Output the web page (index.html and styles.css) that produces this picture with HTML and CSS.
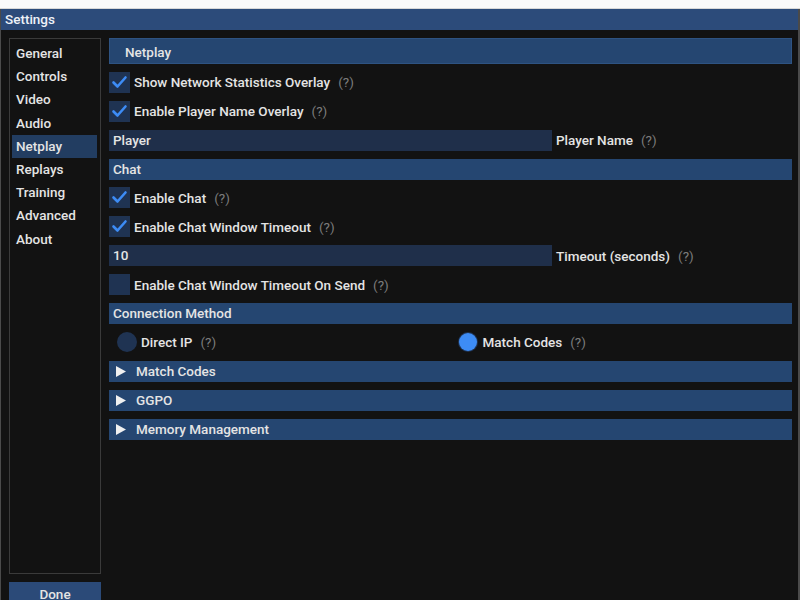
FILE: index.html
```html
<!DOCTYPE html>
<html lang="en">
<head>
    <meta charset="UTF-8">
    <title>Settings</title>
    <link rel="stylesheet" href="styles.css">
</head>
<body>
    <div class="top-strip"></div>
    <div class="window">
        <div class="title-bar">Settings</div>
        <div class="window-body">
            <div class="side">
                <nav class="side-list">
                    <div class="side-item">General</div>
                    <div class="side-item">Controls</div>
                    <div class="side-item">Video</div>
                    <div class="side-item">Audio</div>
                    <div class="side-item active">Netplay</div>
                    <div class="side-item">Replays</div>
                    <div class="side-item">Training</div>
                    <div class="side-item">Advanced</div>
                    <div class="side-item">About</div>
                </nav>
                <button class="done">Done</button>
            </div>

            <main class="content">
                <div class="tab-head">Netplay</div>

                <div class="row">
                    <span class="check on"><svg width="21" height="21" viewBox="0 0 21 21"><polyline points="4.5,10.5 8.5,14.5 16.5,5.5" /></svg></span>
                    <span class="label">Show Network Statistics Overlay</span>
                    <span class="help">(?)</span>
                </div>
                <div class="row">
                    <span class="check on"><svg width="21" height="21" viewBox="0 0 21 21"><polyline points="4.5,10.5 8.5,14.5 16.5,5.5" /></svg></span>
                    <span class="label">Enable Player Name Overlay</span>
                    <span class="help">(?)</span>
                </div>
                <div class="row">
                    <div class="input">Player</div>
                    <span class="label">Player Name</span>
                    <span class="help">(?)</span>
                </div>

                <div class="section">Chat</div>
                <div class="row">
                    <span class="check on"><svg width="21" height="21" viewBox="0 0 21 21"><polyline points="4.5,10.5 8.5,14.5 16.5,5.5" /></svg></span>
                    <span class="label">Enable Chat</span>
                    <span class="help">(?)</span>
                </div>
                <div class="row">
                    <span class="check on"><svg width="21" height="21" viewBox="0 0 21 21"><polyline points="4.5,10.5 8.5,14.5 16.5,5.5" /></svg></span>
                    <span class="label">Enable Chat Window Timeout</span>
                    <span class="help">(?)</span>
                </div>
                <div class="row">
                    <div class="input">10</div>
                    <span class="label">Timeout (seconds)</span>
                    <span class="help">(?)</span>
                </div>
                <div class="row">
                    <span class="check"></span>
                    <span class="label">Enable Chat Window Timeout On Send</span>
                    <span class="help">(?)</span>
                </div>

                <div class="section">Connection Method</div>
                <div class="row radios">
                    <div class="radio-opt">
                        <span class="radio"></span>
                        <span class="label">Direct IP</span>
                        <span class="help">(?)</span>
                    </div>
                    <div class="radio-opt">
                        <span class="radio on"></span>
                        <span class="label">Match Codes</span>
                        <span class="help">(?)</span>
                    </div>
                </div>

                <div class="section fold"><svg class="arrow" width="10" height="11" viewBox="0 0 10 11"><polygon points="0,0 10,5.5 0,11" /></svg>Match Codes</div>
                <div class="section fold"><svg class="arrow" width="10" height="11" viewBox="0 0 10 11"><polygon points="0,0 10,5.5 0,11" /></svg>GGPO</div>
                <div class="section fold"><svg class="arrow" width="10" height="11" viewBox="0 0 10 11"><polygon points="0,0 10,5.5 0,11" /></svg>Memory Management</div>
            </main>
        </div>
    </div>
</body>
</html>
```

FILE: styles.css
```css
:root {
    --blue-head: #254671;
    --blue-frame: #1f3352;
    --text: #e4e4e4;
    --row: 21px;
    --gap: 7.9px;
}
html, body {
    margin: 0;
    padding: 0;
    width: 100%;
    height: 100%;
    overflow: hidden;
    background: #121212;
    font-family: Roboto, "Liberation Sans", sans-serif;
    font-size: 13.5px;
    font-weight: 500;
    color: var(--text);
}
.top-strip {
    height: 8px;
    background: #fafafa;
    border-bottom: 1px solid #d8d8d8;
}
.window {
    height: 591px;
    display: flex;
    flex-direction: column;
    border-left: 1px solid #4a4a4a;
    border-right: 2px solid #4a4a4a;
    box-sizing: border-box;
}
.title-bar {
    height: 21px;
    line-height: 21px;
    padding-left: 4px;
    background: #2c4b7a;
    color: #eef2f8;
}
.window-body {
    flex: 1;
    display: flex;
    gap: 8px;
    padding: 8px 6px 0 8px;
    min-height: 0;
}
.side {
    width: 92px;
    display: flex;
    flex-direction: column;
    gap: 8px;
}
.side-list {
    flex-shrink: 0;
    height: 536px;
    box-sizing: border-box;
    border: 1px solid #3a3a3a;
    padding: 3px 3px 0 2px;
}
.side-item {
    height: 23.2px;
    line-height: 23px;
    padding-left: 4px;
}
.side-item.active {
    background: #223d61;
}
.done {
    flex-shrink: 0;
    height: 24px;
    padding: 0;
    border: none;
    background: #2b4a78;
    color: var(--text);
    font: inherit;
}
.content {
    flex: 1;
    display: flex;
    flex-direction: column;
    gap: var(--gap);
}
.tab-head {
    height: 26px;
    line-height: 26px;
    padding-left: 15px;
    background: var(--blue-head);
    border: 1px solid #2e5382;
    box-sizing: border-box;
}
.row {
    height: var(--row);
    display: flex;
    align-items: center;
}
.label {
    margin-left: 4px;
}
.help {
    margin-left: 8px;
    color: #7c7c7c;
    font-weight: 400;
}
.check {
    width: 21px;
    height: 21px;
    background: var(--blue-frame);
}
.check svg {
    display: block;
    fill: none;
    stroke: #3d8cf5;
    stroke-width: 2.6;
    stroke-linecap: round;
    stroke-linejoin: round;
}
.input {
    width: 443px;
    height: 100%;
    line-height: var(--row);
    padding-left: 4px;
    box-sizing: border-box;
    background: #1f2f4a;
}
.section {
    height: var(--row);
    line-height: var(--row);
    padding-left: 4px;
    background: var(--blue-head);
}
.section.fold {
    display: flex;
    align-items: center;
    padding-left: 7px;
}
.arrow {
    fill: #f0f0f0;
    margin-right: 10px;
}
.radios {
    display: grid;
    grid-template-columns: 1fr 1fr;
}
.radio-opt {
    display: flex;
    align-items: center;
    padding-left: 8px;
}
.radio {
    width: 20px;
    height: 20px;
    border-radius: 50%;
    background: var(--blue-frame);
}
.radio.on {
    width: 18px;
    height: 18px;
    margin-right: 2px;
    background: #3d8cf5;
    box-shadow: 0 0 0 1px #1f3352;
}
```
